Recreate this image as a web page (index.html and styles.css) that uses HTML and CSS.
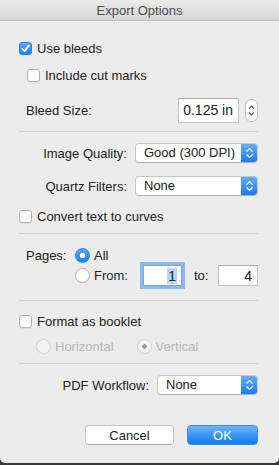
FILE: index.html
```html
<!DOCTYPE html>
<html lang="en">
<head>
  <meta charset="UTF-8">
  <meta name="viewport" content="width=device-width, initial-scale=1.0">
  <title>Export Options</title>
  <link rel="stylesheet" href="styles.css">
</head>
<body>
  <div class="window">
    <header class="titlebar">Export Options</header>

    <div class="content">
      <!-- Bleeds -->
      <label class="row row-bleeds">
        <span class="checkbox checked">
          <svg viewBox="0 0 13 13" width="13" height="13"><path d="M3.2 6.8 L5.5 9.2 L9.8 3.6" fill="none" stroke="#fff" stroke-width="1.8" stroke-linecap="round" stroke-linejoin="round"/></svg>
        </span>
        Use bleeds
      </label>
      <label class="row row-cut">
        <span class="checkbox"></span>
        Include cut marks
      </label>
      <div class="row row-size">
        <span class="size-label">Bleed Size:</span>
        <span class="textfield size-field">0.125 in</span>
        <span class="stepper">
          <svg viewBox="0 0 13 23" width="13" height="23"><path d="M4.3 9.3 L6.5 7 L8.7 9.3 M4.3 13.7 L6.5 16 L8.7 13.7" fill="none" stroke="#555" stroke-width="1.1" stroke-linecap="round" stroke-linejoin="round"/></svg>
        </span>
      </div>

      <div class="separator sep-1"></div>

      <!-- Image options -->
      <div class="row row-popup row-quality">
        <span class="popup-label">Image Quality:</span>
        <span class="popup popup-wide">
          <span class="popup-value">Good (300 DPI)</span>
          <span class="popup-arrows"><svg viewBox="0 0 17 20" width="17" height="20"><path d="M5.8 8.2 L8.5 5.6 L11.2 8.2 M5.8 11.8 L8.5 14.4 L11.2 11.8" fill="none" stroke="#fff" stroke-width="1.3" stroke-linecap="round" stroke-linejoin="round"/></svg></span>
        </span>
      </div>
      <div class="row row-popup row-quartz">
        <span class="popup-label">Quartz Filters:</span>
        <span class="popup popup-wide">
          <span class="popup-value">None</span>
          <span class="popup-arrows"><svg viewBox="0 0 17 20" width="17" height="20"><path d="M5.8 8.2 L8.5 5.6 L11.2 8.2 M5.8 11.8 L8.5 14.4 L11.2 11.8" fill="none" stroke="#fff" stroke-width="1.3" stroke-linecap="round" stroke-linejoin="round"/></svg></span>
        </span>
      </div>
      <label class="row row-curves">
        <span class="checkbox"></span>
        Convert text to curves
      </label>

      <div class="separator sep-2"></div>

      <!-- Pages -->
      <div class="pages">
        <span class="pages-label">Pages:</span>
        <div class="pages-options">
          <label class="pages-line line-all">
            <span class="radio selected"></span>
            All
          </label>
          <div class="pages-line line-from">
            <span class="radio"></span>
            <span class="from-label">From:</span>
            <span class="textfield page-field focused"><span class="selection">1</span></span>
            <span class="to-label">to:</span>
            <span class="textfield page-field to-field">4</span>
          </div>
        </div>
      </div>

      <div class="separator sep-3"></div>

      <!-- Booklet -->
      <label class="row row-booklet">
        <span class="checkbox"></span>
        Format as booklet
      </label>
      <div class="row row-layout disabled">
        <span class="layout-option">
          <span class="radio off"></span>
          Horizontal
        </span>
        <span class="layout-option option-vertical">
          <span class="radio off selected-off"></span>
          Vertical
        </span>
      </div>

      <div class="separator sep-4"></div>

      <div class="row row-popup row-workflow">
        <span class="popup-label">PDF Workflow:</span>
        <span class="popup popup-narrow">
          <span class="popup-value">None</span>
          <span class="popup-arrows"><svg viewBox="0 0 17 20" width="17" height="20"><path d="M5.8 8.2 L8.5 5.6 L11.2 8.2 M5.8 11.8 L8.5 14.4 L11.2 11.8" fill="none" stroke="#fff" stroke-width="1.3" stroke-linecap="round" stroke-linejoin="round"/></svg></span>
        </span>
      </div>

      <div class="buttons">
        <button class="btn btn-cancel">Cancel</button>
        <button class="btn btn-ok">OK</button>
      </div>
    </div>
  </div>
</body>
</html>
```

FILE: styles.css
```css
/* General styles */
html, body {
  margin: 0;
  padding: 0;
}

body {
  width: 279px;
  height: 465px;
  background-color: #3a3a3a;
  font-family: "Liberation Sans", Arial, sans-serif;
  font-size: 13px;
  color: #222;
  overflow: hidden;
}

.window {
  height: 463px;
  background-color: #ececec;
  border-radius: 0 0 5px 5px;
  overflow: hidden;
}

.titlebar {
  height: 20px;
  line-height: 21px;
  text-align: center;
  color: #4c4c4c;
  background: linear-gradient(#ebebeb, #d6d6d6);
  border-bottom: 1px solid #c2c2c2;
}

.content {
  padding: 0 21px 0 19px;
}

/* Rows */
.row {
  display: flex;
  align-items: center;
  height: 20px;
}

.row-bleeds { margin-top: 17px; }
.row-cut { margin-top: 7px; padding-left: 8px; }
.row-size { margin-top: 12px; height: 26px; padding-left: 7px; }
.row-quality { margin-top: 11px; }
.row-quartz { margin-top: 13px; }
.row-curves { margin-top: 10px; }
.row-booklet { margin-top: 10px; }
.row-layout { margin-top: 5px; padding-left: 17px; }
.row-workflow { margin-top: 11px; }

.separator {
  height: 1px;
  background-color: #d4d4d4;
}

.sep-1 { margin-top: 8px; }
.sep-2 { margin-top: 7px; }
.sep-3 { margin-top: 14px; }
.sep-4 { margin-top: 7px; }

/* Checkbox */
.checkbox {
  box-sizing: border-box;
  width: 13px;
  height: 13px;
  margin-right: 5px;
  background: #fff;
  border: 1px solid #b3b3b3;
  border-radius: 3px;
  box-shadow: 0 1px 0 rgba(0, 0, 0, 0.05);
  flex-shrink: 0;
}

.checkbox svg {
  display: block;
  margin: -1px;
}

.checkbox.checked {
  background: linear-gradient(#5aa8fc, #1a7ff6);
  border-color: #2a80e8;
}

/* Bleed size */
.size-label {
  flex: 1;
}

.textfield {
  box-sizing: border-box;
  display: flex;
  align-items: center;
  justify-content: flex-end;
  background: #fff;
  border: 1px solid #c3c3c3;
  border-top-color: #aaa;
  padding-right: 5px;
}

.size-field {
  width: 61px;
  height: 25px;
  font-size: 14px;
}

.stepper {
  box-sizing: border-box;
  width: 13px;
  height: 23px;
  margin-left: 6px;
  background: #fff;
  border: 1px solid #c0c0c0;
  border-radius: 6px;
}

.stepper svg {
  display: block;
  margin: -1px;
}

/* Pop-up buttons */
.row-popup {
  justify-content: flex-end;
}

.popup-label {
  margin-right: 8px;
}

.popup {
  box-sizing: border-box;
  display: flex;
  height: 20px;
  background: #fff;
  border: 1px solid #c5c5c5;
  border-bottom-color: #b2b2b2;
  border-radius: 4px;
  overflow: hidden;
}

.popup-wide { width: 123px; }
.popup-narrow { width: 101px; }

.popup-value {
  flex: 1;
  padding-left: 8px;
  line-height: 18px;
}

.popup-arrows {
  width: 17px;
  margin: -1px -1px -1px 0;
  background: linear-gradient(#68b0fb, #1579f5);
}

.popup-arrows svg {
  display: block;
}

/* Pages */
.pages {
  display: flex;
  margin-top: 12px;
  padding-left: 7px;
}

.pages-label {
  width: 49px;
  line-height: 19px;
}

.pages-options {
  flex: 1;
}

.pages-line {
  display: flex;
  align-items: center;
}

.line-all { height: 19px; }
.line-from { height: 21px; }

.radio {
  box-sizing: border-box;
  width: 15px;
  height: 15px;
  margin-right: 4px;
  border-radius: 50%;
  background: #fff;
  border: 1px solid #b0b0b0;
  flex-shrink: 0;
}

.radio.selected {
  background: radial-gradient(circle, #fff 0 2.5px, transparent 3px), linear-gradient(#5aa8fc, #1a7ff6);
  border-color: #2a80e8;
}

.from-label {
  width: 49px;
}

.page-field {
  height: 21px;
}

.page-field.focused {
  width: 39px;
  box-shadow: 0 0 0 3px #8ab9ef;
  border-color: #7aa8e0;
  margin-right: 12px;
  font-size: 14px;
  padding-right: 4px;
}

.selection {
  background: #b4d5fe;
  padding: 0 1px;
}

.to-label {
  width: 24px;
}

.to-field {
  width: 40px;
  font-size: 14px;
}

/* Booklet layout (disabled) */
.disabled {
  color: #b4b4b4;
}

.layout-option {
  display: flex;
  align-items: center;
}

.option-vertical {
  margin-left: 23px;
}

.radio.off {
  background: #f3f3f3;
  border-color: #d0d0d0;
}

.radio.selected-off {
  background: radial-gradient(circle, #9a9a9a 0 2px, transparent 2.5px), #f3f3f3;
}

/* Buttons */
.buttons {
  display: flex;
  justify-content: flex-end;
  gap: 13px;
  margin-top: 30px;
}

.btn {
  box-sizing: border-box;
  height: 20px;
  padding: 0;
  font-family: inherit;
  font-size: 13px;
  border-radius: 4px;
}

.btn-cancel {
  width: 89px;
  background: #fff;
  color: #222;
  border: 1px solid #c6c6c6;
  border-bottom-color: #b0b0b0;
}

.btn-ok {
  width: 71px;
  color: #fff;
  background: linear-gradient(#6cb3fa, #0f7cf6);
  border: 1px solid #3b8ef0;
}
```
